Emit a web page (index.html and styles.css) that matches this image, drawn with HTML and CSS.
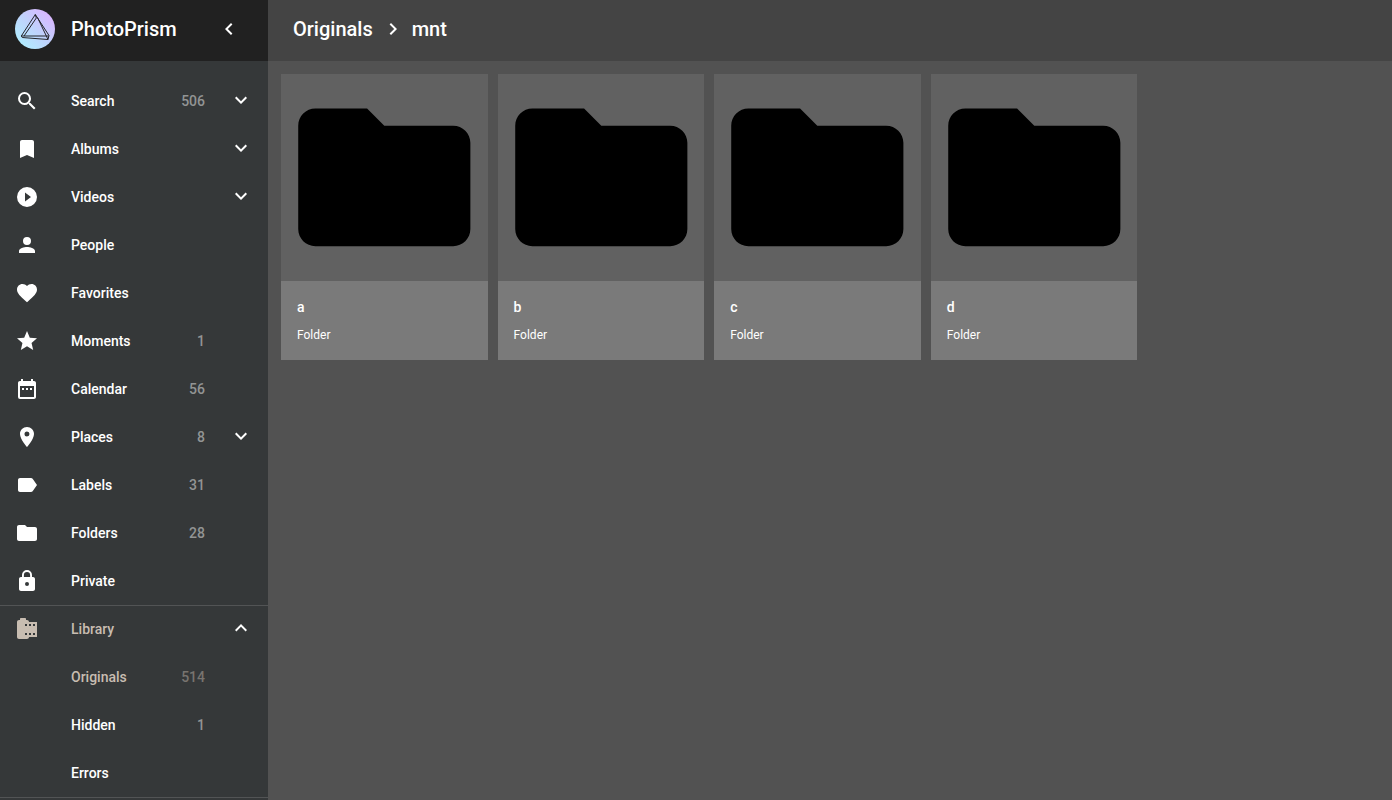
FILE: index.html
```html
<!DOCTYPE html>
<html lang="en">
<head>
<meta charset="utf-8">
<meta name="viewport" content="width=device-width, initial-scale=1">
<title>PhotoPrism</title>
<link rel="stylesheet" href="styles.css">
</head>
<body>
<svg class="defs" aria-hidden="true">
  <symbol id="down" viewBox="0 0 24 24"><path d="M7.41 8.59 12 13.17l4.59-4.58L18 10l-6 6-6-6z"/></symbol>
  <symbol id="up" viewBox="0 0 24 24"><path d="M7.41 15.41 12 10.83l4.59 4.58L18 14l-6-6-6 6z"/></symbol>
  <symbol id="folder" viewBox="0 0 24 24"><path d="M10 4H4c-1.1 0-2 .9-2 2v12c0 1.1.9 2 2 2h16c1.1 0 2-.9 2-2V8c0-1.1-.9-2-2-2h-8z"/></symbol>
</svg>
<div class="app">
  <aside class="sidebar">
    <div class="brand">
      <a class="logo" href="#" aria-label="Home">
        <svg viewBox="0 0 40 40">
          <defs><linearGradient id="tint" x1="0" y1="1" x2="1" y2="0"><stop offset=".1" stop-color="#b0eeff"/><stop offset=".5" stop-color="#bfd2fc"/><stop offset=".9" stop-color="#dcb4ff"/></linearGradient></defs>
          <circle cx="20" cy="20" r="20" fill="url(#tint)"/>
          <path d="M20.300 5.500 6.300 27l1 1.500L33 30.500l1-4zM20.300 5.500l1 3.500L9 27M6.300 27H34M22.500 8.500l10.500 22" fill="none" stroke="#25252b" stroke-linejoin="round"/>
        </svg>
      </a>
      <span class="title">PhotoPrism</span>
      <button class="icon-button" type="button" aria-label="Collapse sidebar"><svg viewBox="0 0 24 24"><path d="M15.410 16.590 10.830 12l4.580-4.590L14 6l-6 6 6 6z"/></svg></button>
    </div>
    <nav class="nav">
      <ul class="group">
        <li class="row"><svg class="icon" viewBox="0 0 24 24"><path d="M9.500 3A6.500 6.500 0 0 1 16 9.500c0 1.610-.59 3.090-1.560 4.230l.27.270h.79l5 5-1.500 1.500-5-5v-.79l-.27-.27A6.516 6.516 0 0 1 9.500 16a6.500 6.500 0 0 1 0-13m0 2C7 5 5 7 5 9.500S7 14 9.500 14 14 12 14 9.500 12 5 9.500 5"/></svg><a class="label" href="#">Search</a><span class="count">506</span><button class="icon-button" type="button" aria-label="Expand Search"><svg><use href="#down"/></svg></button></li>
        <li class="row"><svg class="icon" viewBox="0 0 24 24"><path d="M17 3H7c-1.100 0-2 .9-2 2v16l7-3 7 3V5c0-1.100-.9-2-2-2"/></svg><a class="label" href="#">Albums</a><button class="icon-button" type="button" aria-label="Expand Albums"><svg><use href="#down"/></svg></button></li>
        <li class="row"><svg class="icon" viewBox="0 0 24 24"><path d="M12 2a10 10 0 1 0 0 20 10 10 0 0 0 0-20m-2 14.500v-9l6 4.500z"/></svg><a class="label" href="#">Videos</a><button class="icon-button" type="button" aria-label="Expand Videos"><svg><use href="#down"/></svg></button></li>
        <li class="row"><svg class="icon" viewBox="0 0 24 24"><path d="M12 12a4 4 0 1 0 0-8 4 4 0 0 0 0 8m0 2c-2.670 0-8 1.340-8 4v2h16v-2c0-2.660-5.330-4-8-4"/></svg><a class="label" href="#">People</a></li>
        <li class="row"><svg class="icon" viewBox="0 0 24 24"><path d="m12 21.350-1.450-1.320C5.400 15.360 2 12.280 2 8.500 2 5.420 4.420 3 7.500 3c1.740 0 3.410.81 4.500 2.090C13.090 3.810 14.760 3 16.500 3 19.580 3 22 5.420 22 8.500c0 3.780-3.400 6.860-8.550 11.540z"/></svg><a class="label" href="#">Favorites</a></li>
        <li class="row"><svg class="icon" viewBox="0 0 24 24"><path d="M12 17.270 18.180 21l-1.640-7.030L22 9.240l-7.190-.61L12 2 9.190 8.630 2 9.240l5.460 4.730L5.820 21z"/></svg><a class="label" href="#">Moments</a><span class="count">1</span></li>
        <li class="row"><svg class="icon" viewBox="0 0 24 24"><path d="M9 11H7v2h2zm4 0h-2v2h2zm4 0h-2v2h2zm2-7h-1V2h-2v2H8V2H6v2H5c-1.110 0-2 .9-2 2v14a2 2 0 0 0 2 2h14c1.100 0 2-.9 2-2V6c0-1.100-.9-2-2-2m0 16H5V9h14z"/></svg><a class="label" href="#">Calendar</a><span class="count">56</span></li>
        <li class="row"><svg class="icon" viewBox="0 0 24 24"><path d="M12 2C8.130 2 5 5.130 5 9c0 5.250 7 13 7 13s7-7.750 7-13c0-3.870-3.130-7-7-7m0 9.500a2.500 2.500 0 1 1 0-5 2.500 2.500 0 0 1 0 5"/></svg><a class="label" href="#">Places</a><span class="count">8</span><button class="icon-button" type="button" aria-label="Expand Places"><svg><use href="#down"/></svg></button></li>
        <li class="row"><svg class="icon" viewBox="0 0 24 24"><path d="M17.630 5.840C17.270 5.330 16.670 5 16 5H5c-1.100 0-2 .9-2 2v10c0 1.100.9 2 2 2h11c.67 0 1.270-.33 1.630-.84L22 12z"/></svg><a class="label" href="#">Labels</a><span class="count">31</span></li>
        <li class="row"><svg class="icon"><use href="#folder"/></svg><a class="label" href="#">Folders</a><span class="count">28</span></li>
        <li class="row"><svg class="icon" viewBox="0 0 24 24"><path d="M18 8h-1V6A5 5 0 0 0 7 6v2H6c-1.100 0-2 .9-2 2v10c0 1.100.9 2 2 2h12c1.100 0 2-.9 2-2V10c0-1.100-.9-2-2-2m-6 9a2 2 0 1 1 0-4 2 2 0 0 1 0 4M8.900 8V6a3.100 3.100 0 0 1 6.200 0v2z"/></svg><a class="label" href="#">Private</a></li>
      </ul>
      <ul class="group">
        <li class="row active"><svg class="icon" viewBox="0 0 24 24"><path d="M14 5c0-1.100-.9-2-2-2h-1V2c0-.55-.45-1-1-1H6c-.55 0-1 .45-1 1v1H4c-1.100 0-2 .9-2 2v15c0 1.100.9 2 2 2h8c1.100 0 2-.9 2-2h8V5zm-2 13h-2v-2h2zm0-9h-2V7h2zm4 9h-2v-2h2zm0-9h-2V7h2zm4 9h-2v-2h2zm0-9h-2V7h2z"/></svg><a class="label" href="#">Library</a><button class="icon-button" type="button" aria-label="Collapse Library"><svg><use href="#up"/></svg></button></li>
        <li class="row active"><span class="icon"></span><a class="label" href="#">Originals</a><span class="count">514</span></li>
        <li class="row"><span class="icon"></span><a class="label" href="#">Hidden</a><span class="count">1</span></li>
        <li class="row"><span class="icon"></span><a class="label" href="#">Errors</a></li>
      </ul>
      <div class="group"></div>
    </nav>
  </aside>
  <main class="content">
    <header class="toolbar">
      <a class="title" href="#">Originals</a>
      <svg class="separator" viewBox="0 0 24 24"><path d="M8.590 16.590 13.170 12 8.590 7.410 10 6l6 6-6 6z"/></svg>
      <a class="title" href="#">mnt</a>
    </header>
    <section class="cards">
      <a class="card" href="#"><svg class="cover"><use href="#folder"/></svg><span class="details"><span class="name">a</span><span class="kind">Folder</span></span></a>
      <a class="card" href="#"><svg class="cover"><use href="#folder"/></svg><span class="details"><span class="name">b</span><span class="kind">Folder</span></span></a>
      <a class="card" href="#"><svg class="cover"><use href="#folder"/></svg><span class="details"><span class="name">c</span><span class="kind">Folder</span></span></a>
      <a class="card" href="#"><svg class="cover"><use href="#folder"/></svg><span class="details"><span class="name">d</span><span class="kind">Folder</span></span></a>
    </section>
  </main>
</div>
</body>
</html>
```
FILE: styles.css
```css
* { box-sizing: border-box; }
body {
  margin: 0;
  background: #525252;
  color: #fff;
  font-family: Roboto, "Liberation Sans", sans-serif;
  font-size: 14px;
  line-height: 20px;
}
a { color: inherit; text-decoration: none; }
svg { display: block; fill: currentColor; }
.defs { position: absolute; width: 0; height: 0; }
.app { display: flex; height: 100vh; }
.sidebar {
  display: flex;
  flex-direction: column;
  flex: 0 0 268px;
  overflow: hidden;
  background: #353839;
}
.brand {
  display: flex;
  align-items: center;
  flex: none;
  height: 61px;
  padding: 0 27px 3px 15px;
  background: #212121;
}
.logo { width: 40px; height: 40px; margin-right: 16px; }
.title { font-size: 20px; font-weight: 500; line-height: 28px; }
.brand .title { flex: 1; }
.icon-button {
  width: 24px;
  height: 24px;
  padding: 0;
  border: 0;
  background: none;
  color: #fff;
}
.icon-button svg { width: 24px; height: 24px; }
.nav { padding-top: 16px; }
.group { margin: 0; padding: 0; list-style: none; }
.group + .group { box-shadow: inset 0 1px #525455; }
div.group { height: 48px; }
.row {
  display: flex;
  align-items: center;
  height: 48px;
  padding: 0 15px;
  font-weight: 500;
}
.icon { flex: none; width: 24px; height: 24px; margin-right: 32px; }
.label { flex: none; width: 94px; }
.count { width: 40px; text-align: right; color: #929494; }
.row .icon-button { margin: 0 0 2px auto; }
.active { color: #c8bdb1; }
.active .count { color: #78746f; }
.content { flex: 1; min-width: 0; background: #525252; }
.toolbar {
  display: flex;
  align-items: center;
  height: 61px;
  padding: 0 25px 3px;
  background: #444;
}
.separator { width: 24px; height: 24px; margin: 0 7px 0 8px; }
.cards {
  display: grid;
  grid-template-columns: repeat(5, 1fr);
  gap: 10px;
  padding: 13px 38px 13px 13px;
}
.card { display: block; background: #7a7a7a; }
.cover { width: 100%; height: auto; aspect-ratio: 1; background: #616161; color: #000; }
.details { display: flex; flex-direction: column; gap: 8px; padding: 16px 16px 15px; }
.name { font-weight: 500; }
.kind { font-size: 12px; }
```
